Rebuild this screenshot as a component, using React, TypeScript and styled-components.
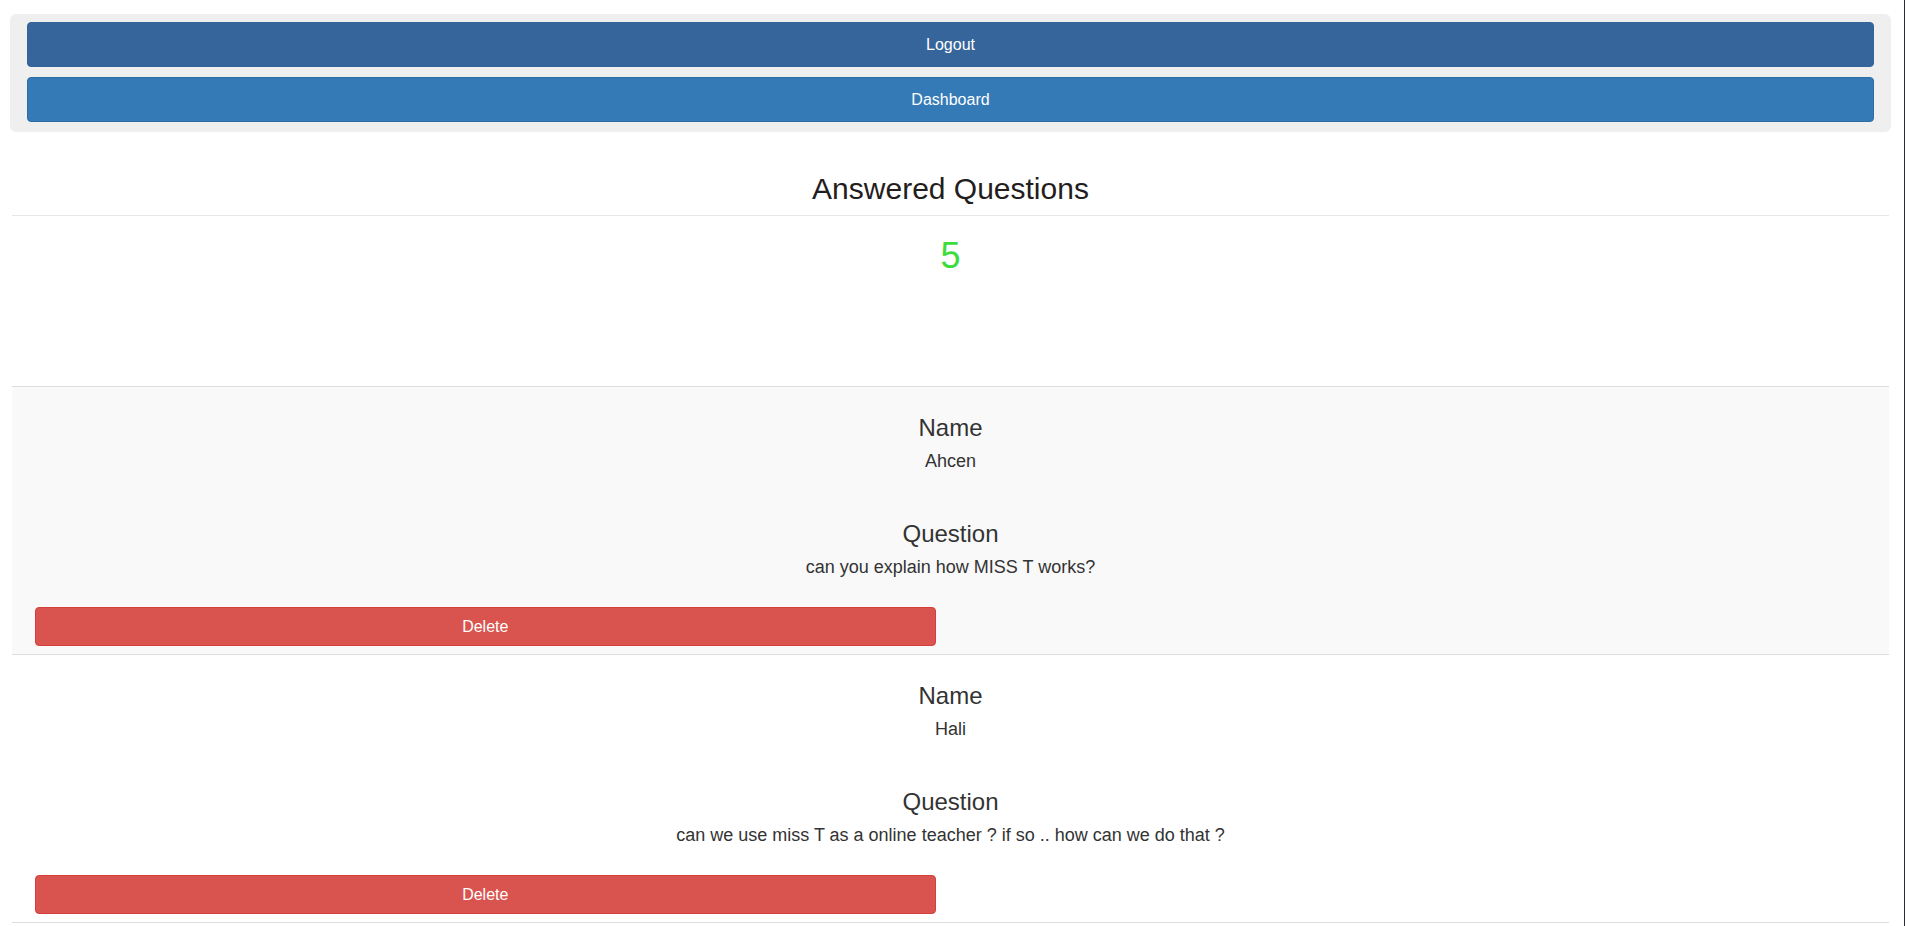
import React from "react";
import styled, { createGlobalStyle } from "styled-components";

const GlobalStyle = createGlobalStyle`
  html {
    overflow: hidden;
    min-height: 100%;
    box-shadow: inset -1px 0 0 #2b2b33;
  }
  body {
    margin: 0;
    font-family: "Liberation Sans", Arial, Helvetica, sans-serif;
    color: #333;
    background: #fff;
  }
  * { box-sizing: border-box; }
`;

const Page = styled.div`
  padding: 14px 14px 0 10px;
`;

const Well = styled.div`
  background: #efefef;
  border-radius: 6px;
  padding: 8px 17px 10px 17px;
  display: flex;
  flex-direction: column;
  gap: 10px;
`;

const NavButton = styled.button<{ $variant: "dark" | "primary" }>`
  display: block;
  width: 100%;
  height: 45px;
  border-radius: 4px;
  border: 1px solid ${(p) => (p.$variant === "dark" ? "#34639a" : "#2e6da4")};
  background: ${(p) => (p.$variant === "dark" ? "#35659a" : "#337ab7")};
  color: #fff;
  font-family: inherit;
  font-size: 16px;
  line-height: 22px;
  padding: 10px 16px;
  text-align: center;
  cursor: pointer;
`;

const Table = styled.div`
  margin: 0 2px;
`;

const HeaderCell = styled.div`
  padding: 40px 8px 10px;
  border-bottom: 1px solid #e6e6e6;
  text-align: center;
`;

const Title = styled.h2`
  margin: 0;
  font-size: 30px;
  font-weight: 400;
  line-height: 33px;
  color: #241d1d;
`;

const CountCell = styled.div`
  padding: 20px 8px 110px;
  text-align: center;
`;

const Count = styled.div`
  font-size: 36px;
  line-height: 40px;
  color: #3cdc3c;
`;

const Row = styled.div<{ $striped: boolean }>`
  border-top: 1px solid #ddd;
  background: ${(p) => (p.$striped ? "#f9f9f9" : "#fff")};
  padding: 8px;
  text-align: center;
  &:last-child {
    border-bottom: 1px solid #ddd;
  }
`;

const Label = styled.h3<{ $first?: boolean }>`
  margin: ${(p) => (p.$first ? "20px" : "47px")} 0 7px;
  font-size: 24px;
  font-weight: 400;
  line-height: 26px;
  color: #333;
`;

const Value = styled.div`
  font-size: 18px;
  line-height: 26px;
  color: #333;
`;

const ActionGrid = styled.div`
  display: grid;
  grid-template-columns: 1fr 1fr;
  margin-top: 27px;
`;

const ActionCol = styled.div`
  padding: 0 15px;
`;

const DeleteButton = styled.button`
  display: block;
  width: 100%;
  height: 39px;
  border-radius: 4px;
  border: 1px solid #d43f3a;
  background: #d9534f;
  color: #fff;
  font-family: inherit;
  font-size: 16px;
  line-height: 23px;
  padding: 7px 12px;
  cursor: pointer;
`;

const questions = [
  { name: "Ahcen", question: "can you explain how MISS T works?" },
  {
    name: "Hali",
    question: "can we use miss T as a online teacher ? if so .. how can we do that ?",
  },
];

export default function App() {
  return (
    <>
      <GlobalStyle />
      <Page>
        <Well>
          <NavButton $variant="dark">Logout</NavButton>
          <NavButton $variant="primary">Dashboard</NavButton>
        </Well>
        <Table>
          <HeaderCell>
            <Title>Answered Questions</Title>
          </HeaderCell>
          <CountCell>
            <Count>5</Count>
          </CountCell>
          {questions.map((q, i) => (
            <Row key={i} $striped={i % 2 === 0}>
              <Label $first>Name</Label>
              <Value>{q.name}</Value>
              <Label>Question</Label>
              <Value>{q.question}</Value>
              <ActionGrid>
                <ActionCol>
                  <DeleteButton>Delete</DeleteButton>
                </ActionCol>
              </ActionGrid>
            </Row>
          ))}
        </Table>
      </Page>
    </>
  );
}
